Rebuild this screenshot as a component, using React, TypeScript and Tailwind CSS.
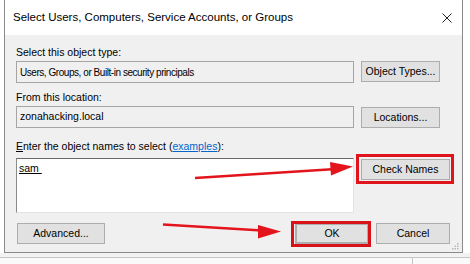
import React from 'react';

const Btn: React.FC<{ label: string; className?: string }> = ({ label, className = '' }) => (
  <div
    className={`h-[21px] flex items-center justify-center bg-[#e1e1e1] border border-[#adadad] text-[10.5px] leading-none ${className}`}
  >
    {label}
  </div>
);

export default function App() {
  return (
    <div className="relative w-[470px] h-[264px] overflow-hidden bg-white text-black font-['Liberation_Sans',Arial,sans-serif]">
      {/* dialog */}
      <div className="relative ml-[4px] w-[459px] border-x border-b border-[#8a8a8a] bg-[#f0f0f0]">
        <div className="h-[35px] bg-white flex items-center justify-between pl-[8px] pr-[10px]">
          <span className="text-[11.5px]">Select Users, Computers, Service Accounts, or Groups</span>
          <svg width="10" height="10" viewBox="0 0 10 10" className="text-[#222]">
            <path d="M0.5 0.5 L9.5 9.5 M9.5 0.5 L0.5 9.5" stroke="currentColor" strokeWidth="1" />
          </svg>
        </div>

        <div className="pl-[11px] pr-[12px] pt-[10px] pb-[8px] text-[10.5px]">
          <div className="h-[15px] leading-[15px]">Select this object type:</div>
          <div className="mt-[1px] flex items-start">
            <div className="w-[338px] h-[22px] border border-[#a5a5a5] flex items-center pl-[3px] text-[10px] tracking-[-0.45px]">
              Users, Groups, or Built-in security principals
            </div>
            <Btn label="Object Types..." className="ml-[7px] w-[79px]" />
          </div>

          <div className="mt-[7px] h-[15px] leading-[15px]">From this location:</div>
          <div className="mt-[1px] flex items-start">
            <div className="w-[338px] h-[22px] border border-[#a5a5a5] flex items-center pl-[3px]">
              zonahacking.local
            </div>
            <Btn label="Locations..." className="ml-[7px] mt-[1px] w-[79px]" />
          </div>

          <div className="mt-[11px] h-[15px] leading-[15px]">
            <span className="underline">E</span>nter the object names to select (<span className="text-[#0066cc] underline">examples</span>):
          </div>
          <div className="mt-[4px] flex items-start">
            <div className="w-[338px] h-[55px] bg-white border-t border-l border-t-[#6a6a6a] border-l-[#8a8a8a] border-r border-b border-r-[#e3e3e3] border-b-[#e3e3e3] pl-[2px] pt-[2px]">
              <span className="underline">sam&nbsp;</span>
            </div>
            <Btn label="Check Names" className="ml-[7px] mt-[1px] w-[89px]" />
          </div>

          <div className="mt-[10px] flex items-start">
            <Btn label="Advanced..." className="ml-[1px] w-[88px]" />
            <Btn label="OK" className="ml-auto w-[74px] border-2 border-[#0078d7]" />
            <Btn label="Cancel" className="ml-[7px] w-[74px]" />
          </div>
        </div>

        {/* resize grip */}
        <svg width="7" height="7" viewBox="0 0 7 7" className="absolute right-[3px] bottom-[2px]">
          <rect x="5" y="0" width="1.5" height="1.5" fill="#b8b8b8" />
          <rect x="2.5" y="2.5" width="1.5" height="1.5" fill="#b8b8b8" />
          <rect x="5" y="2.5" width="1.5" height="1.5" fill="#b8b8b8" />
          <rect x="0" y="5" width="1.5" height="1.5" fill="#b8b8b8" />
          <rect x="2.5" y="5" width="1.5" height="1.5" fill="#b8b8b8" />
          <rect x="5" y="5" width="1.5" height="1.5" fill="#b8b8b8" />
        </svg>
      </div>

      {/* window behind */}
      <div className="h-[4px] bg-[#f2f2f2]" />
      <div className="flex h-[8px] border-t border-[#c6c6c6] bg-[#fafafa]">
        <div className="w-[413px] border-r border-[#c6c6c6]" />
      </div>

      {/* annotations */}
      <div className="absolute left-[356px] top-[154px] w-[98px] h-[30px] border-[3px] border-[#e0141c]" />
      <div className="absolute left-[291px] top-[221px] w-[80px] h-[26px] border-[3px] border-[#d9121a]" />
      <svg width="470" height="264" viewBox="0 0 470 264" className="absolute left-0 top-0 pointer-events-none">
        <line x1="195" y1="178" x2="336" y2="169" stroke="#e3141c" strokeWidth="2.5" />
        <polygon points="330,162 353,166.5 331,175.5" fill="#e3141c" />
        <line x1="163" y1="224.5" x2="262" y2="230.5" stroke="#e3141c" strokeWidth="2.5" />
        <polygon points="258,225 281,231.5 258,238.5" fill="#e3141c" />
      </svg>
    </div>
  );
}
